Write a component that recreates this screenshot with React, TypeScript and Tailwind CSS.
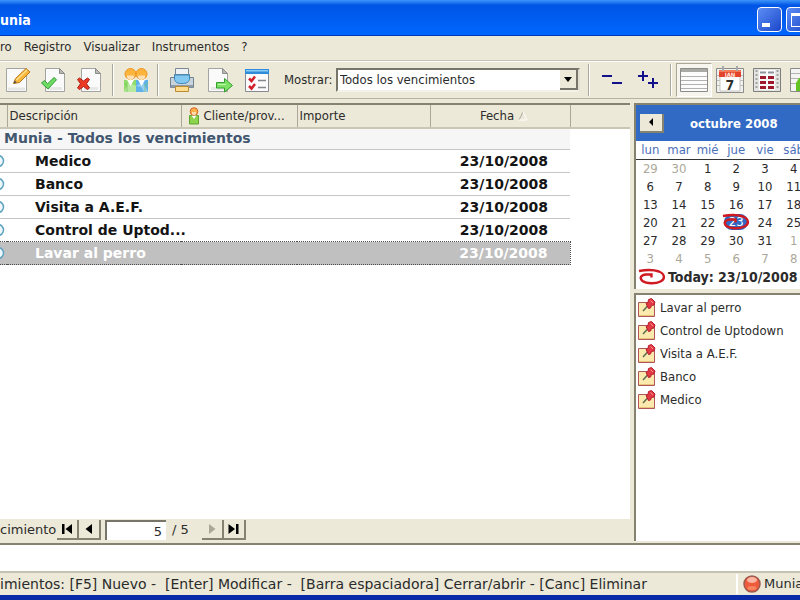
import type { ReactNode } from "react";

const columns = [
  { label: "Descripción", width: "w-[174px]" },
  { label: "Cliente/prov...", width: "w-[116px]" },
  { label: "Importe", width: "w-[133px]" },
];

const deadlines = [
  { name: "Medico", date: "23/10/2008" },
  { name: "Banco", date: "23/10/2008" },
  { name: "Visita a A.E.F.", date: "23/10/2008" },
  { name: "Control de Uptod...", date: "23/10/2008" },
  { name: "Lavar al perro", date: "23/10/2008", selected: true },
];

const notes = ["Lavar al perro", "Control de Uptodown", "Visita a A.E.F.", "Banco", "Medico"];

const weekDays = ["lun", "mar", "mié", "jue", "vie", "sáb"];

const weeks = [
  [29, 30, 1, 2, 3, 4],
  [6, 7, 8, 9, 10, 11],
  [13, 14, 15, 16, 17, 18],
  [20, 21, 22, 23, 24, 25],
  [27, 28, 29, 30, 31, 1],
  [3, 4, 5, 6, 7, 8],
];

function isOtherMonth(week: number, day: number) {
  return (week === 0 && day > 20) || (week >= 4 && day < 20);
}

function PagePaper() {
  return (
    <>
      <path d="M6.5 2.5h14l5 5v18h-19z" fill="#fafafa" stroke="#a3a3a0" />
      <path d="M20.5 2.5v5h5z" fill="#b9b9b6" stroke="#8c8c88" />
      <path d="M9 22.5h14" stroke="#e8e8e6" strokeWidth="3" />
    </>
  );
}

function EditIcon() {
  return (
    <svg width="28" height="28" viewBox="0 0 28 28">
      <path d="M2.5 2.5h20v23h-20z" fill="#fafafa" stroke="#a3a3a0" />
      <path d="M4 23h17" stroke="#e6e6e4" strokeWidth="3" />
      <path d="M9.5 17.5l2-5L22 2.5l4 3.5-10.5 10.5z" fill="#f7b53a" stroke="#b9791d" />
      <path d="M12.5 14L23 4" stroke="#fde08c" strokeWidth="1.5" />
      <path d="M9.5 17.5l1.2-3 2 2z" fill="#4d4a44" />
    </svg>
  );
}

function CheckPageIcon() {
  return (
    <svg width="28" height="28" viewBox="0 0 28 28">
      <PagePaper />
      <path d="M2.5 17l3-2.5 3.2 3.2L15 11.5l2.5 2.2L9 23z" fill="#6fdc62" stroke="#2f9a35" />
    </svg>
  );
}

function DeletePageIcon() {
  return (
    <svg width="28" height="28" viewBox="0 0 28 28">
      <PagePaper />
      <path
        d="M2.5 13.5l2-1.500 4 3 4-3 2 1.500-3 4.200 3 4.300-2 1.500-4-3-4 3-2-1.500 3-4.300z"
        fill="#ee3a24"
        stroke="#a81d12"
      />
    </svg>
  );
}

function PeopleIcon() {
  return (
    <svg width="28" height="28" viewBox="0 0 28 28">
      <path d="M2 26V14h12v12z" fill="#8fdc6a" />
      <path d="M14 26V14h12v12z" fill="#5fb2ea" />
      <path d="M2 26l5-10 7 4v6zM14 20l7-4 5 10h-4l-3-5z" fill="#fff" opacity=".35" />
      <path d="M4.5 13l4 7 4-7zM15.5 13l4 7 4-7z" fill="#fff" />
      <circle cx="8.5" cy="8" r="5.5" fill="#fcb43c" stroke="#ee9526" />
      <circle cx="19.5" cy="8" r="5.5" fill="#fcb43c" stroke="#ee9526" />
      <path d="M5 9.5h7v2.5l-3.5 2.5L5 12zM16 9.5h7v2.5l-3.5 2.5L16 12z" fill="#fde0b4" />
      <path d="M2 17l3 2v7M26 17l-3 2v7" fill="none" stroke="#6cc052" opacity=".6" />
    </svg>
  );
}

function PrinterIcon() {
  return (
    <svg width="28" height="28" viewBox="0 0 28 28">
      <path d="M7.5 2.5h13v9h-13z" fill="#eef2f5" stroke="#7c8995" />
      <path d="M2.5 11.5h4v-3h15v3h4v10h-23z" fill="#c9d3db" stroke="#718391" />
      <path d="M6.5 9h15v4.5c-1 3-3 4-7.5 4s-6.5-1-7.5-4z" fill="#82c8f0" stroke="#3d87b8" />
      <path d="M3 19h22v2.5H3z" fill="#8f9ca6" />
      <path d="M7.5 20.5h13v5h-13z" fill="#fddc8e" stroke="#bd8a34" />
    </svg>
  );
}

function ExportIcon() {
  return (
    <svg width="28" height="28" viewBox="0 0 28 28">
      <g transform="translate(-4 0)">
        <PagePaper />
      </g>
      <path d="M10.5 16.5h8v-4l8 7-8 6.5v-4h-8z" fill="#7de364" stroke="#339e2f" />
      <path d="M12 18.5h8" stroke="#c0f5ae" />
    </svg>
  );
}

function TaskListIcon() {
  return (
    <svg width="28" height="28" viewBox="0 0 28 28">
      <path d="M2.5 3.5h23v22h-23z" fill="#fbfbfb" stroke="#848a90" />
      <path d="M2 3h24v5H2z" fill="#2f8cd8" />
      <path d="M3 4h22v1.5H3z" fill="#8acdf6" />
      <path d="M6 12.5l2.5 2.5L12 10.5M6 20l2.5 2.5L12 18" fill="none" stroke="#d2202a" strokeWidth="2.5" />
      <path d="M15 14.5h8M15 21.5h8" stroke="#82878c" strokeWidth="1.5" />
    </svg>
  );
}

function CollapseIcon() {
  return (
    <svg width="20" height="20" viewBox="0 0 20 20">
      <path d="M0 6h10M10 13h10" stroke="#11118c" strokeWidth="2" />
    </svg>
  );
}

function ExpandIcon() {
  return (
    <svg width="20" height="20" viewBox="0 0 20 20">
      <path d="M0 6h10M5 1v10M10 13h10M15 8v10" stroke="#11118c" strokeWidth="2" />
    </svg>
  );
}

function ListViewIcon() {
  return (
    <svg width="30" height="26" viewBox="0 0 30 26">
      <path d="M1.5 1.5h27v23h-27z" fill="#fcfcfc" stroke="#8b8b88" />
      <path d="M2 2h26v3H2z" fill="#a9a9a6" />
      <path d="M2 9.5h26M2 13.5h26M2 17.5h26M2 21.5h26" stroke="#b2b2b0" />
    </svg>
  );
}

function DayViewIcon() {
  return (
    <svg width="30" height="30" viewBox="0 0 30 30">
      <path d="M1.5 3.5h27v24h-27z" fill="#f1f1ef" stroke="#8b8b88" />
      <path d="M2 10.5h26M2 15.5h26M2 20.5h26" stroke="#bdbdba" />
      <path d="M5 6h20v20H5z" fill="#fff" stroke="#c4c4c1" />
      <path d="M4 5h22v7H4z" fill="#e2432b" />
      <path d="M4 5h22v2H4z" fill="#f37a58" />
      <path d="M8 1v5M22 1v5" stroke="#a7aaac" strokeWidth="2" />
      <text x="15" y="11.5" fontSize="6" fontWeight="bold" fill="#ffe3da" textAnchor="middle">JAN</text>
      <text x="15" y="25" fontSize="14" fontWeight="bold" fill="#2f2f2f" textAnchor="middle">7</text>
    </svg>
  );
}

function MonthViewIcon() {
  return (
    <svg width="30" height="26" viewBox="0 0 30 26">
      <path d="M1.5 1.5h27v23h-27z" fill="#e4e4e2" stroke="#7d7d7a" />
      <path d="M4.5 3v20M25.5 3v20" stroke="#a2a29f" strokeWidth="2" strokeDasharray="2 2" />
      <path d="M7 3h16v20H7z" fill="#fafafa" />
      <path d="M8 5.5h14" stroke="#8f949c" strokeWidth="2" strokeDasharray="6 2" />
      <path d="M8 10.5h14M8 15.5h14M8 20.5h14" stroke="#9c1a2c" strokeWidth="3" strokeDasharray="6 2" />
    </svg>
  );
}

function ReportIcon() {
  return (
    <svg width="30" height="26" viewBox="0 0 30 26">
      <path d="M1.5 1.5h27v23h-27z" fill="#f4f4f2" stroke="#8b8b88" />
      <path d="M2 6.5h26M2 11.5h26M2 16.5h26" stroke="#b2b2b0" />
      <path d="M7 24v-8l3-5h9v13z" fill="#62c422" />
    </svg>
  );
}

function PersonIcon() {
  return (
    <svg width="12" height="18" viewBox="0 0 12 18">
      <path d="M1.5 8.5h9v8.5h-9z" fill="#8ed34e" stroke="#5ea52d" />
      <path d="M3.5 8.5L6 12l2.5-3.5z" fill="#fff" />
      <circle cx="6" cy="4.5" r="3.8" fill="#fcb24a" stroke="#d9602a" />
      <path d="M4 5h4v2L6 8.5 4 7z" fill="#fee0ae" />
    </svg>
  );
}

function PinNoteIcon() {
  return (
    <svg width="18" height="20" viewBox="0 0 18 20" className="shrink-0">
      <path d="M.5 4.5h16v14H.5z" fill="#fce9ae" stroke="#b0565a" />
      <path d="M1 17.5h15" stroke="#e9c27c" />
      <path d="M5 13l5-5.5" stroke="#5d6b52" strokeWidth="1.5" />
      <path d="M8 5.5l2-1 .5-3 3-1L17 4l-1 3-2.5.5-1 2.5-2 .5z" fill="#e23a44" stroke="#b81e2c" />
      <path d="M12.5 2.5l2.5 2.5" stroke="#f9949a" />
    </svg>
  );
}

function TodayRing() {
  return (
    <svg width="28" height="18" viewBox="0 0 28 18">
      <path
        d="M1 3c7-1.3 15-1.3 20 .5 6 2.5 6.5 7.5 1.5 10-5 2.5-14 2.5-18-.5C1 10 3 7 8 6.5h5.5v3"
        fill="none"
        stroke="#cf1a22"
        strokeWidth="2.4"
      />
    </svg>
  );
}

function ToolButton({ label, size, children }: { label: string; size: string; children: ReactNode }) {
  return (
    <button aria-label={label} className={`flex h-8 shrink-0 items-center justify-center ${size}`}>
      {children}
    </button>
  );
}

function Separator() {
  return <div className="mx-1 h-8 w-0.5 shrink-0 border-l border-[#aca899] bg-white" />;
}

function NavButton({ label, path, disabled }: { label: string; path: string; disabled?: boolean }) {
  return (
    <button
      aria-label={label}
      disabled={disabled}
      className="flex h-5 w-[22px] shrink-0 items-center justify-center border-r-2 border-b-2 border-[#85826f] bg-[#ece9d8] text-black disabled:text-[#aca899]"
    >
      <svg width="16" height="14" viewBox="0 0 16 14">
        <path d={path} fill="currentColor" />
      </svg>
    </button>
  );
}

function TitleBar() {
  return (
    <header className="flex h-9 shrink-0 items-center justify-between overflow-hidden border-b border-[#0038b5] bg-linear-to-b from-[#3c94fa] via-[#0055e5] via-15% to-[#0066ff]">
      <h1 className="pt-1.5 text-[14px] font-bold text-white">unia</h1>
      <div className="flex w-[43px] shrink-0 gap-1 pt-1">
        <button aria-label="Minimizar" className="flex h-[25px] w-[25px] shrink-0 items-end rounded border border-white bg-linear-to-br from-[#5d8df5] to-[#1c46c9] p-1">
          <span className="h-1 w-2 bg-white" />
        </button>
        <button aria-label="Maximizar" className="h-[25px] w-[25px] shrink-0 rounded border border-white bg-linear-to-br from-[#5d8df5] to-[#1c46c9] p-1">
          <span className="block h-3.5 w-3.5 border border-t-3 border-white" />
        </button>
      </div>
    </header>
  );
}

function MenuBar() {
  return (
    <nav className="flex h-[25px] shrink-0 items-center gap-3 border-b border-[#c5c2b2] pb-0.5">
      {["ro", "Registro", "Visualizar", "Instrumentos", "?"].map((item) => (
        <button key={item}>{item}</button>
      ))}
    </nav>
  );
}

function Toolbar() {
  return (
    <div className="flex h-[38px] shrink-0 items-center overflow-hidden border-t border-b border-t-white border-b-[#b5b2a2]">
      <ToolButton label="Modificar" size="w-[35px]"><EditIcon /></ToolButton>
      <ToolButton label="Cerrar" size="w-[35px]"><CheckPageIcon /></ToolButton>
      <ToolButton label="Eliminar" size="w-[38px]"><DeletePageIcon /></ToolButton>
      <Separator />
      <ToolButton label="Clientes" size="w-[35px]"><PeopleIcon /></ToolButton>
      <Separator />
      <ToolButton label="Imprimir" size="w-[38px]"><PrinterIcon /></ToolButton>
      <ToolButton label="Exportar" size="w-[38px]"><ExportIcon /></ToolButton>
      <ToolButton label="Lista" size="w-[35px]"><TaskListIcon /></ToolButton>
      <label htmlFor="mostrar" className="w-[62px] shrink-0 pl-2.5">Mostrar:</label>
      <div className="relative w-[244px] shrink-0">
        <select
          id="mostrar"
          className="h-6 w-full appearance-none border-2 border-t-[#77756a] border-r-[#e2dfd0] border-b-[#f4f2e8] border-l-[#77756a] bg-white px-0.5"
        >
          <option>Todos los vencimientos</option>
        </select>
        <span className="pointer-events-none absolute top-0.5 right-0.5 flex h-5 w-[18px] items-center justify-center border-r-2 border-b-2 border-[#77756a] bg-[#ece9d8]">
          <svg width="8" height="5" viewBox="0 0 8 5">
            <path d="M0 0h8L4 5z" fill="#000" />
          </svg>
        </span>
      </div>
      <div className="w-1 shrink-0" />
      <Separator />
      <ToolButton label="Contraer todo" size="w-9"><CollapseIcon /></ToolButton>
      <ToolButton label="Expandir todo" size="w-9"><ExpandIcon /></ToolButton>
      <Separator />
      <div className="flex h-[34px] shrink-0 items-center border border-r-white border-b-white border-t-[#aca899] border-l-[#aca899] bg-[#f6f5ee]">
        <ToolButton label="Vista de lista" size="w-[34px]"><ListViewIcon /></ToolButton>
      </div>
      <ToolButton label="Vista de día" size="w-9"><DayViewIcon /></ToolButton>
      <ToolButton label="Vista de mes" size="w-[38px]"><MonthViewIcon /></ToolButton>
      <ToolButton label="Informe" size="w-9"><ReportIcon /></ToolButton>
    </div>
  );
}

function DeadlineTable() {
  return (
    <table className="w-full table-fixed border-collapse">
      <thead>
        <tr className="h-[23px] border-b-2 border-[#c9c6b4] bg-[#ece9d8] text-left">
          <th className="w-[7px] border-r border-[#aca899] p-0" />
          {columns.map((column) => (
            <th key={column.label} className={`border-r border-[#aca899] p-0 pl-0.5 font-normal ${column.width}`}>
              <span className="flex items-center gap-1 whitespace-nowrap">
                {column.label.startsWith("Cliente") && (
                  <span className="pl-1">
                    <PersonIcon />
                  </span>
                )}
                {column.label}
              </span>
            </th>
          ))}
          <th className="w-[140px] border-r border-[#aca899] p-0 font-normal">
            <span className="flex items-center justify-center gap-1 pl-2">
              Fecha
              <svg width="10" height="10" viewBox="0 0 10 10">
                <path d="M1 9L5 1" stroke="#aca899" />
                <path d="M5 1l4 8H1" fill="none" stroke="#fff" />
              </svg>
            </span>
          </th>
          <th />
        </tr>
      </thead>
      <tbody className="font-['DejaVu_Sans',sans-serif] text-[14px] leading-[18px] font-bold text-[#141414]">
        <tr className="h-5">
          <td colSpan={5} className="bg-[#f6f6f6] p-0 pb-0.5 pl-1 text-[#42566f]">
            Munia - Todos los vencimientos
          </td>
          <td className="p-0" />
        </tr>
        {deadlines.map((item) => {
          const cell = item.selected
            ? "border-y border-dotted border-[#4a4a4a] bg-[#c0c0c0] text-white"
            : "border-t border-[#c6c6c6]";
          return (
            <tr key={item.name} className="h-[23px]">
              <td className={`p-0 ${cell}`}>
                <svg width="5" height="14" viewBox="0 0 5 14">
                  <circle cx="-2" cy="7" r="5.5" fill="#eef8fc" stroke="#5fa3c0" strokeWidth="1.5" />
                </svg>
              </td>
              <td className={`p-0 pl-7 whitespace-nowrap ${cell}`}>{item.name}</td>
              <td className={cell} />
              <td className={cell} />
              <td className={`p-0 pr-[22px] text-right ${cell} ${item.selected ? "border-r" : ""}`}>{item.date}</td>
              <td className="p-0" />
            </tr>
          );
        })}
      </tbody>
    </table>
  );
}

function RecordNavigator() {
  return (
    <div className="flex h-[22px] shrink-0 items-center bg-[#ece9d8] font-['DejaVu_Sans',sans-serif] text-[13px]">
      <label htmlFor="registro" className="w-[57px] shrink-0">cimiento</label>
      <NavButton label="Primero" path="M3 2h2.500v10H3zM13 2v10L6.500 7z" />
      <NavButton label="Anterior" path="M11 2v10L4.500 7z" />
      <input
        id="registro"
        defaultValue="5"
        className="ml-1 h-5 w-[61px] border-t-2 border-l-2 border-[#77756a] bg-white pr-1 text-right"
      />
      <span className="w-9 pl-1.5 whitespace-nowrap">/ 5</span>
      <NavButton label="Siguiente" path="M5 2v10l6.500-5z" disabled />
      <NavButton label="Último" path="M2.500 2v10L9 7zM10 2h2.500v10H10z" />
    </div>
  );
}

function Calendar() {
  return (
    <section className="shrink-0 overflow-hidden border-t-2 border-l-2 border-[#85826f] bg-white pb-0.5">
      <div className="flex h-9 items-center bg-[#316ac5] pl-1">
        <button aria-label="Mes anterior" className="flex h-[19px] w-6 shrink-0 items-center justify-center border-r-2 border-b-2 border-[#85826f] bg-[#ece9d8]">
          <svg width="4" height="8" viewBox="0 0 4 8">
            <path d="M4 0v8L0 4z" fill="#000" />
          </svg>
        </button>
        <h2 className="pt-0.5 pl-[26px] font-bold whitespace-nowrap text-white">octubre 2008</h2>
      </div>
      <table className="w-[172px] table-fixed border-collapse text-center leading-[17px]">
        <thead>
          <tr className="h-[18px] border-b border-[#333] text-[#4a6fb8]">
            {weekDays.map((day) => (
              <th key={day} className="p-0 font-normal">{day}</th>
            ))}
          </tr>
        </thead>
        <tbody>
          {weeks.map((days, week) => (
            <tr key={week} className="h-[18px]">
              {days.map((day) => (
                <td key={day} className={`p-0 ${isOtherMonth(week, day) ? "text-[#aca899]" : ""}`}>
                  {day === 23 ? (
                    <span className="relative mx-auto block w-6 rounded-full bg-[#316ac5] leading-4 text-white">
                      {day}
                      <span className="absolute -top-px -left-0.5">
                        <TodayRing />
                      </span>
                    </span>
                  ) : (
                    day
                  )}
                </td>
              ))}
            </tr>
          ))}
        </tbody>
      </table>
      <p className="flex h-5 items-center gap-0.5 pl-0.5 text-[14px] font-bold whitespace-nowrap">
        <TodayRing />
        Today: 23/10/2008
      </p>
    </section>
  );
}

function NoteList() {
  return (
    <ul className="mt-1 flex-1 border-t-2 border-l-2 border-[#85826f] bg-white pt-px pl-0.5">
      {notes.map((note) => (
        <li key={note} className="flex h-[23px] items-center gap-1 whitespace-nowrap">
          <PinNoteIcon />
          {note}
        </li>
      ))}
    </ul>
  );
}

function StatusBar() {
  return (
    <footer className="flex h-[24px] shrink-0 items-center overflow-hidden border-t-2 border-[#c5c2b2] font-['DejaVu_Sans',sans-serif] text-[14px] whitespace-nowrap">
      <p className="flex-1 whitespace-pre">
        {"imientos: [F5] Nuevo -  [Enter] Modificar -  [Barra espaciadora] Cerrar/abrir - [Canc] Eliminar"}
      </p>
      <p className="flex w-[64px] shrink-0 items-center gap-0.5 border-l-2 border-white pl-1 text-[13px]">
        <svg width="20" height="20" viewBox="0 0 20 20" className="shrink-0">
          <circle cx="10" cy="10" r="8" fill="#ee5a3c" stroke="#9d5a4c" strokeWidth="1.5" />
          <ellipse cx="10" cy="6" rx="5" ry="3" fill="#fbb5a2" />
          <ellipse cx="10" cy="14" rx="4.5" ry="2" fill="#f98560" />
        </svg>
        Munia
      </p>
    </footer>
  );
}

export default function App() {
  return (
    <div className="flex h-screen flex-col overflow-hidden bg-[#ece9d8] font-['DejaVu_Sans_Condensed','DejaVu_Sans',sans-serif] text-[13px] text-[#2b2b2b]">
      <TitleBar />
      <MenuBar />
      <Toolbar />
      <main className="flex min-h-0 flex-1 pt-1">
        <div className="flex min-w-0 flex-1 flex-col border-t-2 border-[#85826f] bg-white">
          <div className="flex-1">
            <DeadlineTable />
          </div>
          <RecordNavigator />
        </div>
        <aside className="ml-1 flex w-[166px] shrink-0 flex-col">
          <Calendar />
          <NoteList />
        </aside>
      </main>
      <div className="mt-0.5 h-7 shrink-0 border-t-2 border-[#85826f] bg-white" />
      <StatusBar />
      <div className="h-[5px] shrink-0 bg-[#0a2ba8]" />
    </div>
  );
}
